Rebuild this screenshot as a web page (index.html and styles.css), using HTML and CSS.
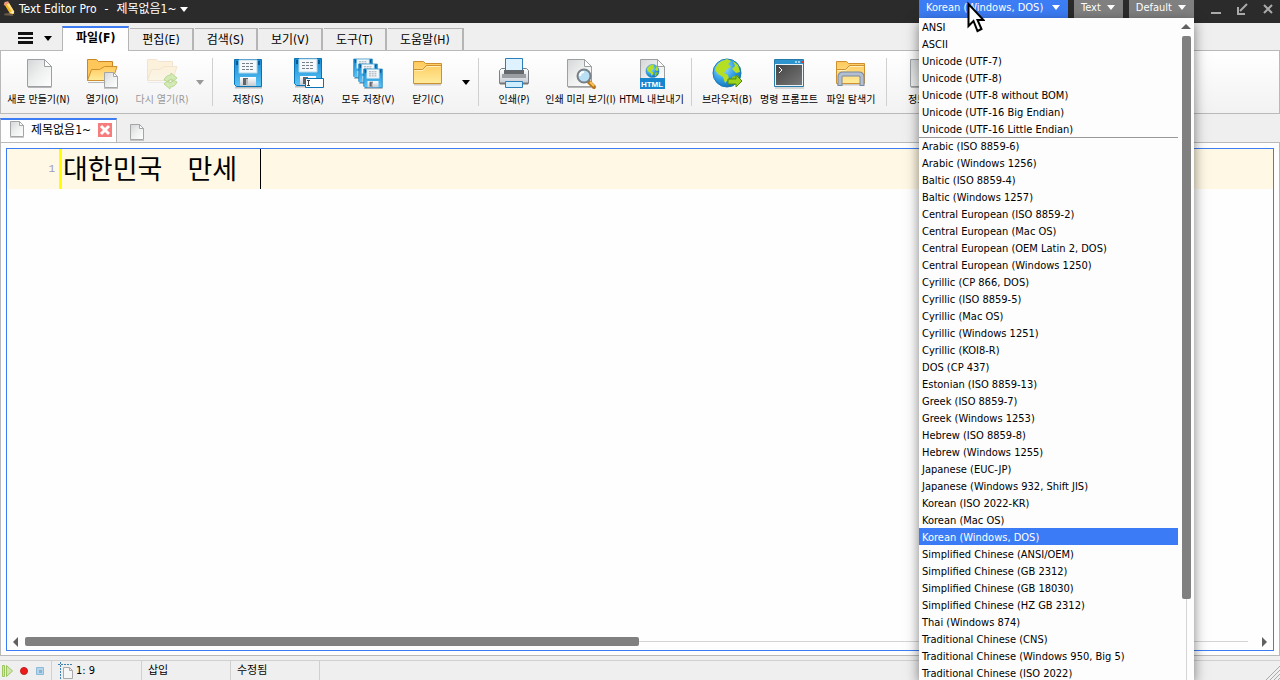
FILE: index.html
```html
<!DOCTYPE html>
<html lang="ko">
<head>
<meta charset="utf-8">
<title>Text Editor Pro - 제목없음1~</title>
<link rel="stylesheet" href="styles.css">
</head>
<body>
<svg class="defs" aria-hidden="true">
  <defs>
    <linearGradient id="paper" x1="0" y1="0" x2="1" y2="1"><stop offset="0" stop-color="#d5d6d7"/><stop offset=".5" stop-color="#eeefef"/><stop offset="1" stop-color="#fff"/></linearGradient>
    <linearGradient id="gold" x1="0" y1="0" x2="0" y2="1"><stop offset="0" stop-color="#ffc95c"/><stop offset="1" stop-color="#ffeb9b"/></linearGradient>
    <linearGradient id="blue" x1="0" y1="0" x2="0" y2="1"><stop offset="0" stop-color="#1689d2"/><stop offset="1" stop-color="#5cc5f7"/></linearGradient>
    <linearGradient id="metal" x1="0" y1="0" x2="0" y2="1"><stop offset="0" stop-color="#fff"/><stop offset="1" stop-color="#c5cbd3"/></linearGradient>
    <linearGradient id="screen" x1="0" y1="0" x2="1" y2="1"><stop offset="0" stop-color="#444"/><stop offset="1" stop-color="#777"/></linearGradient>
    <radialGradient id="sea" cx=".35" cy=".3" r=".8"><stop offset="0" stop-color="#b5e6ff"/><stop offset=".5" stop-color="#3ba5e8"/><stop offset="1" stop-color="#0869b4"/></radialGradient>
    <symbol id="page" viewBox="0 0 32 32">
      <path d="M4.500 1.500h17l7 7v20h-24z" fill="url(#paper)" stroke="#9da0a3"/>
      <path d="M5 29.500h23.500" stroke="#777" opacity=".5"/>
      <path d="M21.500 1.500v7h7z" fill="#fff" stroke="#9da0a3"/>
    </symbol>
    <symbol id="smallpage" viewBox="0 0 14 17">
      <path d="M.500 .500h9l4 4v11h-13z" fill="url(#paper)" stroke="#a3a5a7"/>
      <path d="M9.500 .500v4h4z" fill="#fff" stroke="#a3a5a7"/>
      <path d="M0 16.500h14" stroke="#999" opacity=".5"/>
    </symbol>
    <symbol id="folder" viewBox="0 0 32 32">
      <path d="M2 26.500h27" stroke="#777" stroke-width="2" opacity=".35"/>
      <path d="M1.500 3.500h10l2 2h16v20h-28z" fill="url(#gold)" stroke="#ce9131"/>
      <path d="M1.500 11.500h9l4-4h15" fill="none" stroke="#ce9131"/>
      <path d="M2.500 12.500h8.500l4-4h13.500" fill="none" stroke="#fff0bb"/>
    </symbol>
    <symbol id="openfolder" viewBox="0 0 32 32">
      <path d="M1.500 1.500h9l2 2h14v19h-25z" fill="#ffc65a" stroke="#c88625"/>
      <path d="M5.500 11.500h8l5-3h12.500l-4.500 14h-25z" fill="url(#gold)" stroke="#ce9131"/>
      <path d="M2 24.500h24" stroke="#777" opacity=".5"/>
    </symbol>
    <symbol id="floppy" viewBox="0 0 32 32">
      <path d="M3 29.500h27" stroke="#555" stroke-width="2" opacity=".35"/>
      <path d="M2.500 1.500h27v27h-25l-2-2z" fill="url(#blue)" stroke="#0873b5"/>
      <path d="M7 2h18v13H7z" fill="#f5f9fc" stroke="#b4d7e8"/>
      <path d="M10 5.500h12M10 8.500h12M10 11.500h12" stroke="#76818a" stroke-dasharray="3 1"/>
      <path d="M4 3h2v4H4zM26 3h2v4h-2z" fill="#075b96"/>
      <path d="M8 19h16v9H8z" fill="url(#metal)"/>
      <path d="M11 20h5v7h-5z" fill="#606469"/><path d="M14 21h2v6h-2z" fill="#bdbdbd"/>
    </symbol>
    <symbol id="globe" viewBox="0 0 32 32">
      <circle cx="16" cy="15" r="14" fill="url(#sea)" stroke="#1679b7"/>
      <path d="M5 9l4-5 7-3 4 2-3 3 3 3-4 2-3 4 4 2 1 4-4 4-2-6-5-3-3-4zM22 3l5 4 2 7-4 1-4-4 3-3z" fill="#b4df22"/>
      <path d="M21 19l5-2 2 2-5 7h-2z" fill="#86c519"/>
    </symbol>
  </defs>
</svg>
<div class="app">
  <header class="titlebar">
    <svg class="app-icon" viewBox="0 0 16 16" aria-hidden="true"><path d="M3 13l8-1 4 2-3 2-10-1z" fill="#665848"/><path d="M3 3l5-2 6 10-1 3-4-1z" fill="#f5b629"/><path d="M5 2l3-1 6 10-2 1z" fill="#ffe184"/><path d="M2 3l1-3 4-1 1 2-5 3z" fill="#ed987f"/><path d="M9 12l4-2 1 4z" fill="#fff0c8"/><path d="M12 14l2-1v2z" fill="#111"/></svg>
    <h1 class="title">Text Editor Pro<span>-</span></h1>
    <button class="doc-title">제목없음1~<i class="caret"></i></button>
    <div class="options">
      <div class="encoding">
        <button class="option encoding-button" aria-expanded="true" aria-controls="encodings">Korean (Windows, DOS)<i class="caret"></i></button>
        <div class="popup">
          <ul class="list" id="encodings" role="listbox" aria-label="Encoding">
            <li role="option">ANSI</li><li role="option">ASCII</li><li role="option">Unicode (UTF-7)</li><li role="option">Unicode (UTF-8)</li><li role="option">Unicode (UTF-8 without BOM)</li><li role="option">Unicode (UTF-16 Big Endian)</li><li role="option">Unicode (UTF-16 Little Endian)</li>
            <li role="option" class="group-start">Arabic (ISO 8859-6)</li><li role="option">Arabic (Windows 1256)</li><li role="option">Baltic (ISO 8859-4)</li><li role="option">Baltic (Windows 1257)</li><li role="option">Central European (ISO 8859-2)</li><li role="option">Central European (Mac OS)</li><li role="option">Central European (OEM Latin 2, DOS)</li><li role="option">Central European (Windows 1250)</li>
            <li role="option">Cyrillic (CP 866, DOS)</li><li role="option">Cyrillic (ISO 8859-5)</li><li role="option">Cyrillic (Mac OS)</li><li role="option">Cyrillic (Windows 1251)</li><li role="option">Cyrillic (KOI8-R)</li><li role="option">DOS (CP 437)</li><li role="option">Estonian (ISO 8859-13)</li><li role="option">Greek (ISO 8859-7)</li><li role="option">Greek (Windows 1253)</li><li role="option">Hebrew (ISO 8859-8)</li><li role="option">Hebrew (Windows 1255)</li>
            <li role="option">Japanese (EUC-JP)</li><li role="option">Japanese (Windows 932, Shift JIS)</li><li role="option">Korean (ISO 2022-KR)</li><li role="option">Korean (Mac OS)</li><li role="option" class="selected" aria-selected="true">Korean (Windows, DOS)</li><li role="option">Simplified Chinese (ANSI/OEM)</li><li role="option">Simplified Chinese (GB 2312)</li><li role="option">Simplified Chinese (GB 18030)</li><li role="option">Simplified Chinese (HZ GB 2312)</li><li role="option">Thai (Windows 874)</li><li role="option">Traditional Chinese (CNS)</li><li role="option">Traditional Chinese (Windows 950, Big 5)</li><li role="option">Traditional Chinese (ISO 2022)</li>
          </ul>
          <div class="vscroll"><i class="up"></i><i class="vthumb"></i><i class="vtrack"></i></div>
        </div>
      </div>
      <button class="option">Text<i class="caret"></i></button>
      <button class="option">Default<i class="caret"></i></button>
    </div>
    <div class="window-buttons">
      <button aria-label="Minimize"><svg viewBox="0 0 12 12"><path d="M1 10h10" stroke="#aaa" stroke-width="2"/></svg></button>
      <button aria-label="Restore"><svg viewBox="0 0 12 12"><path d="M11 1L4 8" stroke="#aaa" stroke-width="2"/><path d="M2 4v7h7" fill="none" stroke="#aaa" stroke-width="2"/></svg></button>
      <button aria-label="Close"><svg viewBox="0 0 12 12"><path d="M2 2l8 8M10 2l-8 8" stroke="#aaa" stroke-width="2"/></svg></button>
    </div>
    <svg class="pointer" viewBox="0 0 18 32" aria-hidden="true"><path d="M1.500 3v22l5-5 4 10 4-2-4-9h6z" fill="#fff" stroke="#000" stroke-width="2"/></svg>
  </header>

  <nav class="menu">
    <button class="hamburger" aria-label="Menu"><i class="bars"></i><i class="caret dark"></i></button>
    <button class="menu-tab active">파일(F)</button><button class="menu-tab">편집(E)</button><button class="menu-tab">검색(S)</button><button class="menu-tab">보기(V)</button><button class="menu-tab">도구(T)</button><button class="menu-tab">도움말(H)</button>
  </nav>

  <div class="toolbar">
    <button class="tool wide"><svg viewBox="0 0 32 32"><use href="#page"/></svg>새로 만들기(N)</button>
    <button class="tool"><svg viewBox="0 0 32 32"><use href="#openfolder"/><svg x="18" y="14" width="14" height="17"><use href="#smallpage"/></svg></svg>열기(O)</button>
    <button class="tool faded" disabled><svg viewBox="0 0 32 32"><use href="#openfolder" opacity=".2"/><path d="M18 22q2-5 7-5v-2l6 5-5 4v-3q-3 0-4 3zM31 24q-2 5-7 5v2l-6-5 5-4v3q3 0 4-3z" fill="#d3eab5" stroke="#b9d893"/></svg>다시 열기(R)</button>
    <button class="drop" aria-label="다시 열기 목록" disabled><i class="caret gray"></i></button>
    <i class="separator"></i>
    <button class="tool"><svg viewBox="0 0 32 32"><use href="#floppy"/></svg>저장(S)</button>
    <button class="tool"><svg viewBox="0 0 32 32"><use href="#floppy" y="-1"/><path d="M13.500 20.500h18v9h-18z" fill="#fff" stroke="#0873b5"/><path d="M15 22.500h3M16.500 23v5M15 27.500h3" stroke="#444"/></svg>저장(A)</button>
    <button class="tool"><svg viewBox="0 0 32 32"><use href="#floppy" width="22" height="22"/><use href="#floppy" x="5" y="5" width="22" height="22"/><use href="#floppy" x="10" y="10" width="22" height="22"/></svg>모두 저장(V)</button>
    <button class="tool"><svg viewBox="0 0 32 32"><use href="#folder"/></svg>닫기(C)</button>
    <button class="drop" aria-label="닫기 목록"><i class="caret dark"></i></button>
    <i class="separator"></i>
    <button class="tool"><svg viewBox="0 0 32 32"><path d="M1.500 12.500l2-2h25l2 2v13h-29z" fill="url(#metal)" stroke="#7c8187"/><path d="M7.500 .500h17v12h-17z" fill="#dff2ff" stroke="#2c7fb6"/><path d="M6 12h20v6H6z" fill="#63676b"/><path d="M4 16h24v4H4z" fill="#9b9fa3"/><path d="M2 25.500h28" stroke="#777" stroke-width="2"/><path d="M7.500 23.500h17v6h-17z" fill="#cdeeff" stroke="#2c7fb6"/></svg>인쇄(P)</button>
    <button class="tool wider"><svg viewBox="0 0 32 32"><use href="#page" x="-2"/><path d="M24 24l5 5" stroke="#b8751b" stroke-width="4" stroke-linecap="round"/><path d="M25 24l4 4" stroke="#f9c555" stroke-width="2"/><circle cx="19" cy="18" r="6.500" fill="#b9dff4" stroke="#777f87" stroke-width="2"/><path d="M15 18q0-4 4-4" fill="none" stroke="#fff" stroke-width="2"/></svg>인쇄 미리 보기(I)</button>
    <button class="tool export"><svg viewBox="0 0 32 32"><use href="#page"/><svg x="9" y="6" width="15" height="15"><use href="#globe"/></svg><path d="M4 20h25v11H4z" fill="#1886cf"/><text x="16" y="29" text-anchor="middle" class="badge-text">HTML</text></svg>HTML 내보내기</button>
    <i class="separator"></i>
    <button class="tool"><svg viewBox="0 0 32 32"><use href="#globe"/><path d="M17 21h8v-4l6 6-6 6v-3h-8z" fill="#9bd31d" stroke="#538b13"/></svg>브라우저(B)</button>
    <button class="tool medium"><svg viewBox="0 0 32 32"><path d="M2 30h29" stroke="#777" opacity=".5"/><path d="M1.500 1.500h29v27h-29z" fill="#eaf3f8" stroke="#267bab"/><path d="M2 2h28v4H2z" fill="#2e94cd"/><path d="M22 3h2v2h-2zM25 3h2v2h-2z" fill="#9bd0ee"/><path d="M28 3h2v2h-2z" fill="#e43f31"/><path d="M3 7h26v20H3z" fill="url(#screen)"/><path d="M6 9l3 3-3 3" fill="none" stroke="#fff" stroke-width="1"/></svg>명령 프롬프트</button>
    <button class="tool"><svg viewBox="0 0 32 32"><use href="#folder"/><path d="M5 28V19q0-3 3-3h16q3 0 3 3v9" fill="none" stroke="#7888a0" stroke-width="5"/><path d="M5 27V19q0-3 3-3h16q3 0 3 3v8" fill="none" stroke="#b3bfd0" stroke-width="3"/></svg>파일 탐색기</button>
    <i class="separator"></i>
    <button class="tool"><svg viewBox="0 0 32 32"><use href="#page"/></svg>정보(I)</button>
  </div>

  <nav class="file-tabs">
    <div class="file-tab"><svg viewBox="0 0 14 17"><use href="#smallpage"/></svg><span>제목없음1~</span><button class="close" aria-label="Close tab"><svg viewBox="0 0 14 14"><path d="M3 3l8 8M11 3l-8 8" stroke="#fff" stroke-width="3"/></svg></button></div>
    <button class="new-tab" aria-label="New tab"><svg viewBox="0 0 14 17"><use href="#smallpage"/></svg></button>
  </nav>

  <main class="workspace">
    <div class="editor">
      <div class="line"><span class="number">1</span><div class="code"><span>대한민국</span><span>만세</span></div></div>
      <div class="blank"></div>
      <div class="hscroll"><i class="left"></i><i class="hthumb"></i><i class="htrack"></i><i class="right"></i></div>
    </div>
  </main>

  <footer class="status">
    <div class="macro">
      <svg viewBox="0 0 14 14"><path d="M1.500 1.500h2v11h-2zM5.500 1.500l6 5.500-6 5.500z" fill="#d1e5af" stroke="#9bc65f"/></svg>
      <svg viewBox="0 0 14 14"><circle cx="7" cy="7" r="3.500" fill="#f01818" stroke="#ba2222"/></svg>
      <svg viewBox="0 0 14 14"><path d="M3.500 3.500h7v7h-7z" fill="#b5d4e8" stroke="#8bbbd9"/><path d="M6 6h3v3H6z" fill="#83b4d3"/></svg>
    </div>
    <div class="cell position"><svg viewBox="0 0 16 18"><path d="M0 2.500h14M2.500 0v17" stroke="#3d80b4" stroke-dasharray="2 1"/><path d="M5.500 5.500h6l3 3v8h-9z" fill="#f6f6f6" stroke="#aaa"/><path d="M11.500 5.500v3h3" fill="none" stroke="#aaa"/></svg>1: 9</div>
    <div class="cell mode">삽입</div>
    <div class="cell mode">수정됨</div>
    <div class="cell rest"><svg class="grip" viewBox="0 0 14 14"><path d="M0 14L14 0M4 14L14 4M8 14l6-6M12 14l2-2" stroke="#aaa"/></svg></div>
  </footer>
</div>
</body>
</html>
```
FILE: styles.css
```css
* { box-sizing: border-box; }
html, body { height: 100%; margin: 0; overflow: hidden; }
body, button { font-family: "DejaVu Sans Condensed", "Noto Sans", "Noto Sans CJK KR", sans-serif; font-size: 11px; color: #000; }
button { border: 0; padding: 0; background: none; }
i { display: block; flex: none; }
.defs { position: absolute; width: 0; height: 0; }
.app { height: 100%; display: flex; flex-direction: column; background: #efefef; }

.titlebar { position: relative; z-index: 2; flex: none; height: 23px; display: flex; align-items: flex-start; padding-left: 2px; background: #2b2b2b; color: #fff; line-height: 18px; }
.titlebar button { color: #fff; line-height: 18px; }
.app-icon { width: 14px; height: 18px; }
.title { display: flex; gap: 8px; margin: 0 0 0 3px; font-size: 12px; font-weight: 400; }
.doc-title { display: flex; align-items: center; gap: 4px; margin-left: 8px; font-size: 12px; }
.caret { width: 0; height: 0; border: 4px solid transparent; border-top: 5px solid #fff; border-bottom: 0; }
.caret.dark { border-top-color: #000; }
.caret.gray { border-top-color: #999; }
.options { display: flex; gap: 6px; margin-left: auto; }
.encoding { position: relative; }
.option { display: flex; align-items: center; justify-content: space-between; gap: 6px; height: 18px; padding: 0 8px 3px 7px; background: #808080; }
.encoding-button { width: 149px; background: #3c7df5; }
.window-buttons { display: flex; gap: 14px; margin: 3px 6px 0 16px; }
.window-buttons button { width: 12px; height: 12px; }
.window-buttons svg { display: block; }
.pointer { position: absolute; right: 295px; top: 1px; width: 18px; height: 32px; }

.popup { position: absolute; left: 0; top: 18px; width: 275px; height: calc(100vh - 18px); display: flex; background: #fdfdfd; box-shadow: 0 4px 12px rgba(0, 0, 0, .5); color: #000; }
.list { flex: 1; margin: 0; padding: 0; overflow: hidden; list-style: none; }
.list li { height: 17px; padding-left: 3px; line-height: 19px; white-space: nowrap; }
.list .group-start { border-top: 1px solid #999; line-height: 17px; }
.list .selected { background: #3b7bf6; color: #fff; }
.vscroll { width: 16px; display: flex; flex-direction: column; align-items: center; padding-top: 6px; }
.up { border: 5px solid transparent; border-bottom-color: #606060; border-top: 0; }
.vthumb { width: 9px; height: 563px; margin-top: 7px; border-radius: 2px; background: #808080; }
.vtrack { width: 1px; flex: 1; background: #d4d4d4; }

.menu { flex: none; height: 27px; display: flex; align-items: flex-end; gap: 1px; padding-top: 3px; }
.hamburger { width: 61px; height: 24px; display: flex; align-items: center; gap: 11px; padding-left: 18px; }
.bars { width: 15px; height: 12px; border-top: 3px solid #111; border-bottom: 3px solid #111; background: linear-gradient(#111, #111) center / 100% 2px no-repeat; }
.menu-tab { height: 22px; padding: 0 12px; border: 1px solid #b5b5b5; border-right-width: 2px; border-bottom: 0; border-left: 0; font-size: 12px; line-height: 20px; }
.menu-tab.active { z-index: 1; height: 25px; margin-bottom: -1px; padding: 0 13px 3px; border-left: 1px solid #b5b5b5; border-right-width: 1px; border-top: 2px solid #3c7df5; background: #fefefe; font-weight: 700; }

.toolbar { flex: none; height: 64px; display: flex; align-items: center; overflow: hidden; padding-left: 4px; border: 1px solid #b9b9b9; background: linear-gradient(#fff, #f2f2f2); }
.tool { flex: none; width: 60px; display: flex; flex-direction: column; align-items: center; gap: 3px; font-size: 10px; line-height: 14px; white-space: nowrap; }
.tool > svg { width: 32px; height: 32px; overflow: visible; }
.tool.medium { width: 64px; }
.tool.wide { width: 67px; }
.tool.wider { width: 73px; }
.tool.export { width: 69px; }
.tool.faded { color: #999; }
.drop { width: 15px; flex: none; display: flex; justify-content: center; }
.separator { width: 1px; height: 48px; margin: 0 5px; background: #d0d0d0; }
.badge-text { font: 700 8px "Liberation Sans", sans-serif; fill: #fff; }

.file-tabs { flex: none; display: flex; align-items: flex-end; height: 28px; padding-top: 4px; }
.file-tab { height: 25px; display: flex; align-items: center; gap: 7px; padding: 0 4px 4px 9px; margin-bottom: -1px; border: 1px solid #b9b9b9; border-top: 2px solid #3c7df5; border-bottom: 0; background: #fefefe; font-size: 12px; line-height: 18px; }
.file-tab > svg, .new-tab svg { display: block; width: 14px; height: 17px; }
.file-tab .close { width: 14px; height: 14px; background: #f77c7c; }
.close svg { display: block; }
.new-tab { margin-left: 13px; height: 20px; }

.workspace { flex: 1; min-height: 0; display: flex; padding: 5px 5px 4px; border: 1px solid #b9b9b9; background: #fefefe; }
.editor { flex: 1; display: flex; flex-direction: column; border: 1px solid #3c7df5; }
.line { flex: none; height: 40px; display: flex; align-items: stretch; background: #fff8e4; }
.number { width: 55px; padding-right: 4px; border-right: 3px solid #ff0; color: #9999c9; font: 11px/41px "Liberation Mono", monospace; text-align: right; }
.code { display: flex; gap: 25px; padding: 0 23px 0 1px; border-right: 1px solid #000; font: 27px/38px "Noto Sans CJK KR", sans-serif; }
.blank { flex: 1; }
.hscroll { height: 17px; display: flex; align-items: center; padding: 0 6px; }
.left, .right { border: 5px solid transparent; }
.left { border-left: 0; border-right-color: #606060; }
.right { border-right: 0; border-left-color: #606060; margin-left: 14px; }
.hthumb { width: 49%; height: 9px; margin-left: 7px; border-radius: 2px; background: #808080; }
.htrack { flex: 1; height: 1px; background: #d4d4d4; }

.status { flex: none; height: 24px; display: flex; padding-top: 4px; line-height: 18px; }
.macro { display: flex; align-items: center; gap: 2px; width: 51px; padding-left: 1px; border-top: 1px solid #d0d0d0; }
.macro svg { width: 14px; height: 14px; }
.cell { display: flex; align-items: center; border-top: 1px solid #d0d0d0; border-left: 1px solid #d0d0d0; padding-left: 6px; }
.position { width: 90px; gap: 2px; }
.position svg { width: 16px; height: 18px; }
.mode { width: 89px; }
.rest { flex: 1; justify-content: flex-end; align-items: flex-end; }
.grip { width: 14px; height: 14px; }
```
